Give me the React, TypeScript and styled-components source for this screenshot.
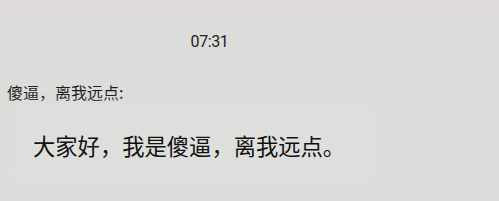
import React from "react";
import styled, { createGlobalStyle } from "styled-components";

const Global = createGlobalStyle`
  html, body { margin: 0; padding: 0; }
  body {
    background: linear-gradient(180deg, #e0dcdc 0px, #dcdddb 30px, #dbdddb 100%);
    width: 499px;
    height: 201px;
    overflow: hidden;
  }
`;

const Screen = styled.div`
  display: flex;
  flex-direction: column;
  width: 499px;
  height: 201px;
  box-sizing: border-box;
  padding-top: 32px;
`;

const TimeRow = styled.div`
  width: 419px;
  text-align: center;
  font-family: Roboto, "Liberation Sans", sans-serif;
  font-size: 16px;
  line-height: 20px;
  letter-spacing: -0.4px;
  color: #1f2021;
`;

const Sender = styled.div`
  margin-top: 29px;
  padding-left: 7px;
  font-family: "Noto Sans CJK SC", "Noto Sans", sans-serif;
  font-size: 16px;
  line-height: 22px;
  color: #1c1c1c;
`;

const Bubble = styled.div`
  align-self: flex-start;
  margin-top: 5px;
  margin-left: 14px;
  padding: 22px 26px 24px 19px;
  border-radius: 10px;
  background: #dedfdd;
  box-shadow: 0 0 12px 4px rgba(222, 223, 221, 0.8);
  font-family: "Noto Sans CJK SC", "Noto Sans", sans-serif;
  font-size: 22.3px;
  font-weight: 400;
  line-height: 30px;
  color: #111111;
`;

export default function App() {
  return (
    <>
      <Global />
      <Screen>
        <TimeRow>07:31</TimeRow>
        <Sender>傻逼，离我远点:</Sender>
        <Bubble>大家好，我是傻逼，离我远点。</Bubble>
      </Screen>
    </>
  );
}
